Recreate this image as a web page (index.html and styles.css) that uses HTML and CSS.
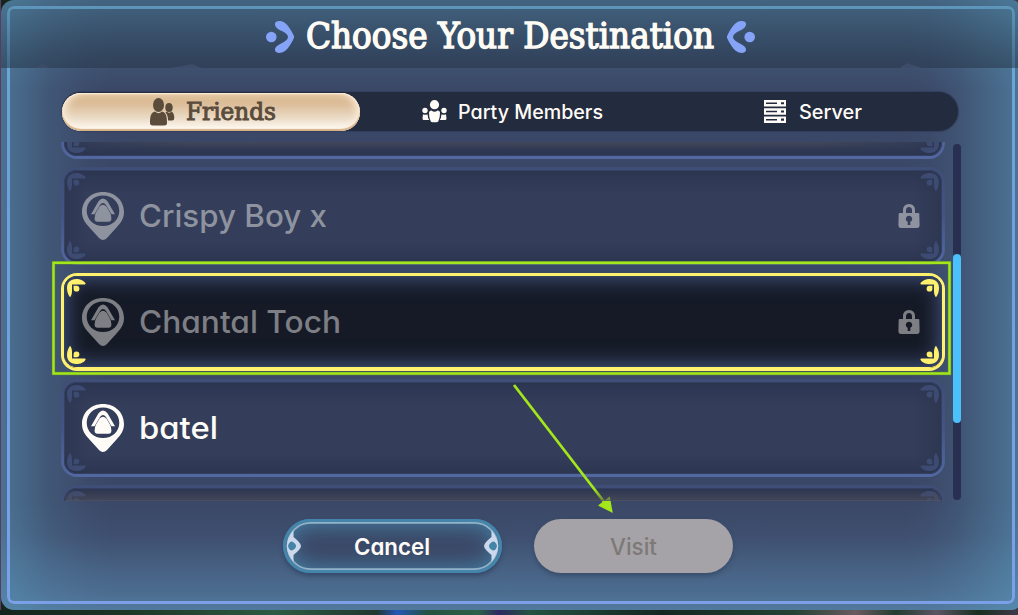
FILE: index.html
```html
<!DOCTYPE html>
<html lang="en">
<head>
<meta charset="utf-8">
<title>Choose Your Destination</title>
<link rel="stylesheet" href="styles.css">
</head>
<body>
<svg class="defs" width="0" height="0">
  <symbol id="corner" viewBox="0 0 19 19">
    <path d="M3 18.3C1 15.5 0 12.5 0 9C0 3.5 3.5 0 9 0C13.500 0 17.200 1.800 18.700 4.600L18 5.500H5V12C5 15 4.200 17.200 3 18.300Z"/>
    <path d="M6.600 6.800H9.500A2.900 2.900 0 1 1 6.600 9.700Z"/>
  </symbol>
  <symbol id="pin" viewBox="0 0 42 48">
    <path fill-rule="evenodd" d="M21 0C33 0 42 8.500 42 20C42 27 38.500 31 34.500 35.500L25 46Q21 50 17 46L7.500 35.500C3.500 31 0 27 0 20C0 8.500 9 0 21 0ZM21 3.400C11.500 3.400 4.700 10 4.700 18.700C4.700 27.500 11.800 34 21 34C30.200 34 37.300 27.500 37.300 18.700C37.300 10 30.500 3.400 21 3.400Z"/>
    <path d="M9 22.300H12.500L18 13Q21 8.800 24 13L29.500 22.300H33L25.500 9.300Q21 3.600 16.500 9.300Z"/>
    <path d="M17.600 14.500Q21 10.800 24.400 14.500L28 20.500Q29.400 23 29.400 26.500Q29.400 29.700 26.500 29.700H15.500Q12.600 29.700 12.600 26.500Q12.600 23 14 20.500Z"/>
  </symbol>
  <symbol id="lock" viewBox="0 0 22 24">
    <path fill-rule="evenodd" d="M5 9V6.500Q5 0 11 0T17 6.500V9H20.500Q21.300 9 21.300 10L21.600 21Q21.600 24 19 24H3Q.4 24 .4 21L.7 10Q.7 9 1.500 9ZM8 9H14V6.500Q14 3 11 3T8 6.500ZM9.700 21H12.300V17.800A3.200 3.200 0 1 0 9.700 17.800Z"/>
  </symbol>
  <symbol id="flourish" viewBox="0 0 28 32">
    <circle cx="5.300" cy="16" r="5.300"/>
    <path d="M9 2.500C10-.5 15-.7 19 2C23 5 26 11 28 15.200V16.800C26 21 23 27 19 30C15 32.700 10 32.500 9 29.500C8.500 26 12 24 16 22C20 20 22 18 22 16C22 14 20 12 16 10C12 8 8.500 6 9 2.500Z"/>
  </symbol>
</svg>

<main class="dialog">
  <div class="frame"></div>
  <header class="header">
    <svg class="flourish" width="28" height="32"><use href="#flourish"/></svg>
    <svg class="title" width="408" height="44"><text x="0" y="34" textLength="408" lengthAdjust="spacingAndGlyphs">Choose Your Destination</text></svg>
    <svg class="flourish mirror" width="28" height="32"><use href="#flourish"/></svg>
    <svg class="ridges" width="1018" height="5"><path d="M36 5L42 1L50 5ZM170 5L192 1L202 5ZM900 5L907 0L922 5Z"/></svg>
  </header>

  <nav class="tabs">
    <div class="tab active">
      <svg width="25" height="28" viewBox="0 0 25 28"><ellipse cx="8.500" cy="7" rx="5.500" ry="7"/><path d="M0 25C0 18 1 14.500 5 13.500Q8.500 17 12 13.500C16 14.500 17 18 17 25Q17 27.500 14 27.500H3Q0 27.500 0 25Z"/><ellipse cx="19" cy="9.500" rx="3.700" ry="4.500"/><path d="M15.500 14.500L17 13.500Q19 16 21.500 13.500Q24.300 15 24.300 20Q24.300 22.500 22 22.500H18Q18 17 15.500 14.500Z"/></svg>
      <svg class="label serif" width="90" height="30"><text x="0" y="22.500" textLength="90" lengthAdjust="spacingAndGlyphs">Friends</text></svg>
    </div>
    <div class="tab party">
      <svg width="25" height="23" viewBox="0 0 25 23"><circle cx="12.500" cy="4.700" r="4.600"/><circle cx="3" cy="10.500" r="2.700"/><circle cx="22" cy="10.500" r="2.700"/><path d="M7 13Q7 10.500 9.500 10.500Q12.500 13 15.500 10.500Q18 10.500 18 13Q18 17 16.800 20Q16.500 22.300 14.500 22.300H10.500Q8.500 22.300 8.200 20Q7 17 7 13ZM1 14.200Q3 15.500 5.500 14.200Q5.800 18 7.200 20H2Q.5 20 .5 18.500ZM24 14.200Q22 15.500 19.500 14.200Q19.200 18 17.800 20H23Q24.500 20 24.500 18.500Z"/></svg>
      <svg class="label" width="146" height="28"><text x="0" y="21" textLength="145" lengthAdjust="spacingAndGlyphs">Party Members</text></svg>
    </div>
    <div class="tab server">
      <svg width="22" height="23" viewBox="0 0 22 23"><path fill-rule="evenodd" d="M0 0H22V6.500H0ZM2 2.500V4H13V2.500ZM17 2.200V4.300H20V2.200ZM0 8.200H22V14.700H0ZM2 10.700V12.200H13V10.700ZM17 10.400V12.500H20V10.400ZM0 16.400H22V22.900H0ZM2 18.900V20.400H13V18.900ZM17 18.600V20.700H20V18.600Z"/></svg>
      <svg class="label" width="64" height="28"><text x="0" y="21" textLength="63" lengthAdjust="spacingAndGlyphs">Server</text></svg>
    </div>
  </nav>

  <section class="content">
    <div class="list">
      <article class="card first"><svg class="corner bl"><use href="#corner"/></svg><svg class="corner br"><use href="#corner"/></svg></article>
      <article class="card locked">
        <svg class="corner tl"><use href="#corner"/></svg><svg class="corner tr"><use href="#corner"/></svg><svg class="corner bl"><use href="#corner"/></svg><svg class="corner br"><use href="#corner"/></svg>
        <svg class="pin" width="42" height="48"><use href="#pin"/></svg>
        <svg class="name" width="190" height="44"><text x="0" y="33" textLength="188" lengthAdjust="spacingAndGlyphs">Crispy Boy x</text></svg>
        <svg class="lock" width="22" height="24"><use href="#lock"/></svg>
      </article>
      <article class="card locked selected">
        <svg class="corner tl"><use href="#corner"/></svg><svg class="corner tr"><use href="#corner"/></svg><svg class="corner bl"><use href="#corner"/></svg><svg class="corner br"><use href="#corner"/></svg>
        <svg class="pin" width="42" height="48"><use href="#pin"/></svg>
        <svg class="name" width="204" height="44"><text x="0" y="33" textLength="202" lengthAdjust="spacingAndGlyphs">Chantal Toch</text></svg>
        <svg class="lock" width="22" height="24"><use href="#lock"/></svg>
      </article>
      <article class="card">
        <svg class="corner tl"><use href="#corner"/></svg><svg class="corner tr"><use href="#corner"/></svg><svg class="corner bl"><use href="#corner"/></svg><svg class="corner br"><use href="#corner"/></svg>
        <svg class="pin" width="42" height="48"><use href="#pin"/></svg>
        <svg class="name" width="80" height="44"><text x="0" y="33" textLength="79" lengthAdjust="spacingAndGlyphs">batel</text></svg>
      </article>
      <article class="card"><svg class="corner tl"><use href="#corner"/></svg><svg class="corner tr"><use href="#corner"/></svg></article>
    </div>
    <div class="scrollbar"><div class="thumb"></div></div>
  </section>

  <footer class="actions">
    <button class="button cancel">
      <svg class="trim" width="219" height="54" viewBox="0 0 219 54">
        <rect x="4.500" y="3.800" width="210" height="46.400" rx="23" fill="none" stroke="#92b2c8" stroke-width="1.700"/>
        <g id="clasp"><path d="M10.500 11Q3.800 20 3.800 27T10.500 43V36Q18 30 18 27T10.500 18Z" fill="#ccd9ec"/><path d="M5 27Q6 22.500 9 22.500Q13 24.500 13 27Q13 29.500 9 31.500Q6 31.500 5 27Z" fill="#4583a9"/></g>
        <use href="#clasp" transform="translate(219 0) scale(-1 1)"/>
      </svg>
      <svg class="label" width="77" height="30"><text x="0" y="24" textLength="76" lengthAdjust="spacingAndGlyphs">Cancel</text></svg>
    </button>
    <button class="button visit" disabled>
      <svg class="label" width="48" height="30"><text x="0" y="24" textLength="47" lengthAdjust="spacingAndGlyphs">Visit</text></svg>
    </button>
  </footer>
</main>

<svg class="annotation" width="1018" height="615">
  <rect x="53.500" y="262.800" width="896" height="110.700" fill="none" stroke="#5d8734" stroke-width="3.400"/>
  <rect x="53.500" y="262.800" width="896" height="110.700" fill="none" stroke="#a2e61b" stroke-width="2.400"/>
  <path d="M514 385L605 503" stroke="#a2e61b" stroke-width="2.800"/>
  <path d="M612.800 513L598 505.500L609.800 496.500Z" fill="#a2e61b"/>
</svg>
</body>
</html>
```
FILE: styles.css
```css
* { box-sizing: border-box; }

body {
  margin: 0;
  width: 1018px;
  height: 615px;
  overflow: hidden;
  font-family: Inter, sans-serif;
  background:
    linear-gradient(90deg, #4a3550, #5d3f60 30%, #3d3050 60%, #172720 75%) 0 0 / 2px 610px no-repeat,
    linear-gradient(90deg, #14251d 0, #1c3525 12%, #2d5b43 27%, #21382e 37%, #2457b8 39%, #245340 42%, #2b6148 47%, #2d2a62 49%, #235342 52%, #142821 65%, #244333 78%, #6b5b60 84%, #243c30 88%, #5b5664 92%, #19301f 96%, #403a49 100%);
}

.defs { position: absolute; }

.dialog {
  position: relative;
  display: flex;
  flex-direction: column;
  width: 1019px;
  height: 610px;
  margin-left: 1px;
  border-radius: 13px 8px 8px 13px;
  overflow: hidden;
  background:
    linear-gradient(90deg, rgba(88, 147, 182, .55) 0, rgba(88, 147, 182, .42) 20px, rgba(88, 147, 182, .2) 48px, rgba(88, 147, 182, .05) 85px, transparent 110px),
    linear-gradient(270deg, rgba(88, 147, 182, .6) 0, rgba(88, 147, 182, .42) 25px, rgba(88, 147, 182, .17) 62px, rgba(88, 147, 182, .04) 90px, transparent 115px),
    linear-gradient(0deg, rgba(96, 155, 195, .6) 0, rgba(96, 155, 195, .46) 16px, rgba(96, 155, 195, .27) 48px, rgba(96, 155, 195, .09) 75px, transparent 110px),
    linear-gradient(180deg, rgba(85, 149, 180, .45), transparent 90px),
    #3b4766;
}

.frame {
  position: absolute;
  inset: 6px 5px 6px 6px;
  border-radius: 7px;
  padding: 3px;
  background: linear-gradient(#68a8d2, #6da0dc 35%, #7ba0e8);
  -webkit-mask: linear-gradient(#000 0 0) content-box exclude, linear-gradient(#000 0 0);
  mask: linear-gradient(#000 0 0) content-box exclude, linear-gradient(#000 0 0);
}

.header {
  position: relative;
  display: flex;
  justify-content: center;
  align-items: flex-start;
  gap: 12px;
  height: 68px;
  padding: 15px 0 0 2px;
  margin-left: -2px;
  flex: none;
  background: linear-gradient(rgba(36, 52, 66, .12), rgba(36, 54, 70, .3) 45%, rgba(36, 50, 68, .52));
}

.flourish { fill: #86a4f7; margin-top: 6px; }
.mirror { transform: scaleX(-1); margin-left: 1px; }
.title { overflow: visible; margin-top: -1px; }
.title text {
  font: 34.500px "DejaVu Serif Condensed", "DejaVu Serif", serif;
  fill: #fffcf5;
  stroke: #fffcf5;
  stroke-width: 1.300px;
}
.ridges { position: absolute; left: 1px; bottom: 0; fill: #3e4c6a; }

.tabs {
  display: grid;
  grid-template-columns: 298px 298px 300px;
  width: 896px;
  height: 39px;
  margin: 24px 0 0 61px;
  border-radius: 20px;
  flex: none;
  background: #232b3e;
  box-shadow: 0 0 1px 1px #344060;
}

.tab { display: flex; align-items: center; gap: 12px; fill: #fffcf8; }
.party { padding-left: 62px; gap: 11px; }
.server { padding-left: 106px; gap: 13px; }
.active {
  height: 38px;
  margin-top: 1px;
  padding-left: 88px;
  gap: 11px;
  border-radius: 20px;
  fill: #5a4b3b;
  background: linear-gradient(#d9b78e 0, #dcbe9a 30%, #eadac5 65%, #fdf6ee 92%);
  box-shadow: inset 0 1px 1px #fff0d9, inset 0 -2px 1px #d6b286, inset 5px 0 9px -2px #fff0de, inset -5px 0 9px -2px #fff0de;
}

.label text {
  font-size: 19.500px;
  font-weight: 500;
  font-feature-settings: "cv11";
}
.label.serif text {
  font: 24px "DejaVu Serif Condensed", "DejaVu Serif", serif;
  stroke: #5a4b3b;
  stroke-width: .9px;
}

.content { display: flex; gap: 8px; margin: 11px 0 0 60px; flex: none; }

.list {
  position: relative;
  display: flex;
  flex-direction: column;
  gap: 8px;
  width: 884px;
  height: 359px;
  overflow: hidden;
}
.list::before, .list::after {
  content: "";
  position: absolute;
  z-index: 1;
  left: 4px;
  right: 4px;
  height: 8px;
}
.list::before { top: 0; background: linear-gradient(90deg, transparent, rgba(78, 80, 91, .6) 15%, rgba(78, 80, 91, .6) 85%, transparent); -webkit-mask: linear-gradient(#000, transparent); mask: linear-gradient(#000, transparent); }
.list::after { bottom: 0; height: 12px; background: linear-gradient(transparent, rgba(76, 76, 86, .6) 90%, #52566b); }

.card {
  position: relative;
  display: flex;
  align-items: center;
  flex: none;
  height: 98px;
  padding: 0 22px 0 18px;
  border: 3px solid transparent;
  border-radius: 16px;
  fill: #fffcf8;
  background:
    linear-gradient(#2c3550, transparent 24px, transparent 72px, #2c3550) padding-box,
    linear-gradient(90deg, #2d3751, #343e5b 25px, #343e5b 848px, #2d3751) padding-box,
    linear-gradient(#3f4e77, #435385 50%, #5368a1) border-box;
  box-shadow: inset 0 0 0 1px rgba(59, 72, 108, .6);
}
.first { margin-top: -81px; }
.locked { fill: #8e939f; }
.selected {
  fill: #7d7f84;
  background:
    linear-gradient(#151a26, #151a26) padding-box,
    #fff06e;
  box-shadow: none;
}
.selected::before {
  content: "";
  position: absolute;
  inset: 0 0 1px;
  border-radius: 13px;
  box-shadow: inset 0 0 0 1px #34415f, inset 0 0 22px 1px #4a5c8c, 0 1px 0 #fff06e;
}

.corner { position: absolute; width: 19px; height: 19px; fill: #3d4b72; }
.selected .corner { fill: #fff06e; }
.tl { left: 3px; top: 3px; }
.tr { right: 3px; top: 3px; transform: scaleX(-1); }
.bl { left: 3px; bottom: 3px; transform: scaleY(-1); }
.br { right: 3px; bottom: 3px; transform: scale(-1); }
.selected .bl, .selected .br { bottom: 4px; }

.pin { position: relative; flex: none; }
.name { position: relative; margin-left: 15px; flex: none; }
.name text { font-size: 31px; font-weight: 450; font-feature-settings: "cv11"; }
.lock { position: relative; margin-left: auto; }

.scrollbar {
  width: 8px;
  height: 356px;
  margin-top: 2px;
  padding-top: 110px;
  border-radius: 4px;
  background: #292f50;
}
.thumb { height: 169px; border-radius: 4px; background: #4cc0fb; }

.actions { display: flex; align-items: flex-start; gap: 32px; margin: 18px 0 0 282px; }
.button {
  position: relative;
  display: flex;
  align-items: center;
  justify-content: center;
  height: 54px;
  padding: 0;
  border: 0;
  border-radius: 27px;
  font-family: inherit;
  box-shadow: 0 3px 4px rgba(43, 57, 85, .5);
}
.button .label text { font-size: 23px; font-weight: 600; }
.cancel {
  width: 219px;
  fill: #fffcf8;
  background: #3b4766;
  box-shadow: inset 0 0 0 3px #4685ab, inset 0 0 23px 5px #4685aa, 0 3px 4px rgba(43, 57, 85, .6);
}
.trim { position: absolute; left: 0; top: 0; }
.visit { width: 199px; fill: #7d7977; background: #a5a3a8; }
.visit .label text { font-weight: 500; }

.annotation { position: absolute; left: 0; top: 0; }
```
